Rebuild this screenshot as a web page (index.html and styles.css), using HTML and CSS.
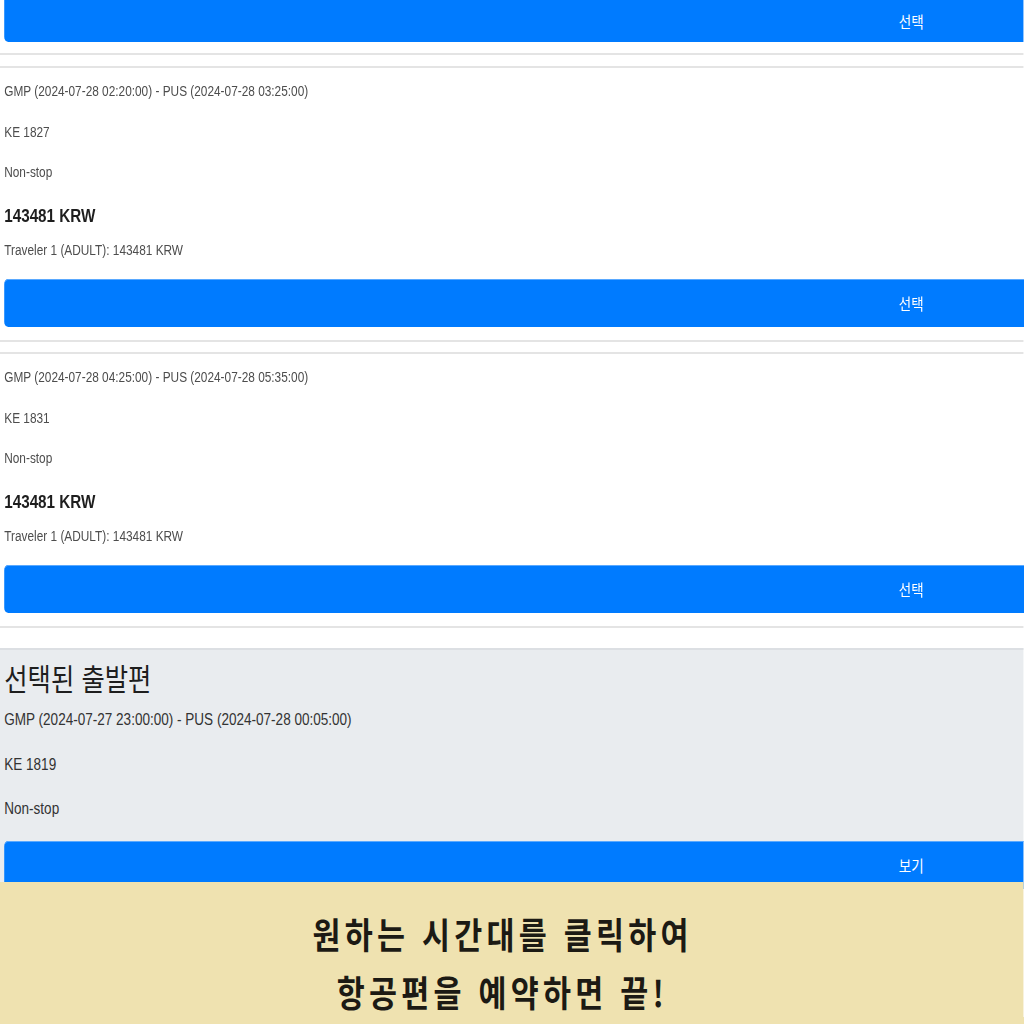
FILE: index.html
```html
<!DOCTYPE html>
<html lang="ko">
<head>
<meta charset="utf-8">
<title>항공편 선택</title>
<link rel="stylesheet" href="styles.css">
</head>
<body>
<div class="page">
  <div class="card card-tail">
    <button class="btn btn-tail">선택</button>
  </div>

  <div class="card">
    <p class="line">GMP (2024-07-28 02:20:00) - PUS (2024-07-28 03:25:00)</p>
    <p class="line">KE 1827</p>
    <p class="line">Non-stop</p>
    <p class="price">143481 KRW</p>
    <p class="traveler">Traveler 1 (ADULT): 143481 KRW</p>
    <button class="btn">선택</button>
  </div>

  <div class="card">
    <p class="line">GMP (2024-07-28 04:25:00) - PUS (2024-07-28 05:35:00)</p>
    <p class="line">KE 1831</p>
    <p class="line">Non-stop</p>
    <p class="price">143481 KRW</p>
    <p class="traveler">Traveler 1 (ADULT): 143481 KRW</p>
    <button class="btn">선택</button>
  </div>

  <section class="selected">
    <h2 class="selected-title">선택된 출발편</h2>
    <p class="sel-line">GMP (2024-07-27 23:00:00) - PUS (2024-07-28 00:05:00)</p>
    <p class="sel-line">KE 1819</p>
    <p class="sel-line">Non-stop</p>
    <button class="btn">보기</button>
  </section>

  <div class="banner">
    <p>원하는 시간대를 클릭하여</p>
    <p>항공편을 예약하면 끝!</p>
  </div>
</div>
</body>
</html>
```

FILE: styles.css
```css
html, body {
  margin: 0;
  padding: 0;
  width: 1024px;
  height: 1024px;
  overflow: hidden;
  background: #ffffff;
}

.page {
  width: 1210px;
  height: 1024px;
  transform: scaleX(0.846);
  transform-origin: 0 0;
  display: flex;
  flex-direction: column;
  font-family: "Liberation Sans", Arial, "Noto Sans CJK KR", sans-serif;
  overflow: hidden;
}

p { margin: 0; }

.card {
  border-top: 2px solid #e4e4e4;
  border-bottom: 2px solid #e4e4e4;
  padding: 11px 0 13px 5px;
  margin-bottom: 10px;
  display: flex;
  flex-direction: column;
  align-items: flex-start;
  overflow: hidden;
}

.card-tail {
  border-top: none;
  padding-top: 0;
  padding-bottom: 11px;
  margin-bottom: 11px;
}

.line {
  font-size: 14px;
  line-height: 24px;
  color: #4d4d4d;
  margin-bottom: 16.5px;
}

.price {
  font-size: 18px;
  line-height: 31px;
  font-weight: 700;
  color: #1e1e1e;
  margin-bottom: 6.5px;
}

.traveler {
  font-size: 14px;
  line-height: 24px;
  color: #4d4d4d;
  margin-bottom: 17px;
}

.btn {
  display: block;
  width: 2144px;
  height: 48px;
  flex: none;
  border: none;
  border-radius: 5px;
  background: #007bff;
  color: #ffffff;
  font-family: "Noto Sans CJK KR", "Liberation Sans", sans-serif;
  font-size: 16px;
  padding: 0;
  text-align: center;
  box-shadow: inset 0 1px 0 #5aa9ff;
}

.btn-tail {
  height: 42px;
  border-radius: 0 0 5px 5px;
  box-shadow: none;
}

.selected {
  margin-top: 10px;
  background: #e9ecef;
  border-top: 2px solid #dcdfe3;
  padding: 11px 0 0 5px;
  flex: none;
  overflow: hidden;
}

.selected-title {
  margin: 0 0 14px 0;
  font-family: "Noto Sans CJK KR", sans-serif;
  font-weight: 400;
  font-size: 30px;
  line-height: 32px;
  color: #1e1e1e;
}

.sel-line {
  font-size: 16px;
  line-height: 26px;
  color: #333333;
  margin-bottom: 18.5px;
}

.selected .btn {
  height: 48px;
}

.banner {
  position: relative;
  margin-top: -7px;
  flex: 1;
  background: #efe2b0;
  padding: 22px 22px 0 0;
  text-align: center;
  font-family: "Noto Sans CJK KR", sans-serif;
  font-weight: 700;
  font-size: 36px;
  line-height: 58px;
  color: #1c1a14;
  letter-spacing: 5px;
}
```
